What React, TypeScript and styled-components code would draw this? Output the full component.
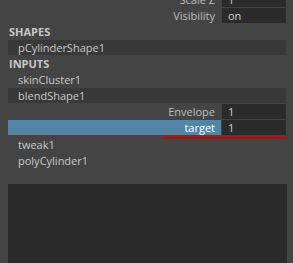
import styled, { createGlobalStyle } from "styled-components";

const Global = createGlobalStyle`
  html, body {
    margin: 0;
    padding: 0;
    background: #444444;
    overflow: hidden;
  }
  body {
    font-family: "Open Sans", "DejaVu Sans", sans-serif;
    font-size: 11px;
    color: #c8c8c8;
  }
`;

const Panel = styled.div`
  width: 293px;
  height: 263px;
  overflow: hidden;
  background: #444444;
  display: flex;
  flex-direction: column;
`;
const List = styled.div`
  margin-top: -8px;
  padding: 0 7px 0 8px;
  display: flex;
  flex-direction: column;
`;
const AttrRow = styled.div<{ selected?: boolean }>`
  position: relative;
  display: grid;
  grid-template-columns: 1fr 64px;
  height: 16px;
  padding-bottom: 1px;
  box-sizing: border-box;
`;
const AttrLabel = styled.div<{ selected?: boolean }>`
  background: ${(p) => (p.selected ? "#5285a6" : "transparent")};
  color: ${(p) => (p.selected ? "#ffffff" : "#bdbdbd")};
  text-align: right;
  padding-right: 6px;
  line-height: 15px;
  margin-right: 1px;
`;
const AttrField = styled.div`
  background: #2b2b2b;
  color: #d0d0d0;
  padding-left: 6px;
  line-height: 15px;
`;
const Section = styled.div`
  height: 16px;
  line-height: 16px;
  padding-left: 1px;
  font-weight: bold;
  color: #c8c8c8;
`;
const Node = styled.div<{ active?: boolean }>`
  height: 15px;
  margin-bottom: 1px;
  line-height: 15px;
  padding-left: 10px;
  background: ${(p) => (p.active ? "#393939" : "transparent")};
  color: #c8c8c8;
`;
const Underline = styled.div`
  position: absolute;
  left: 155px;
  right: -1px;
  bottom: -3px;
  height: 2px;
  background: #d40000;
`;
const Spacer = styled.div`
  height: 1px;
`;
const Output = styled.div`
  margin: 15px 6px 0 8px;
  flex: 1;
  background: #2b2b2b;
`;

function Attr({ label, value, selected }: { label: string; value: string; selected?: boolean }) {
  return (
    <AttrRow>
      <AttrLabel selected={selected}>{label}</AttrLabel>
      <AttrField>{value}</AttrField>
      {selected && <Underline />}
    </AttrRow>
  );
}

export default function App() {
  return (
    <Panel>
      <Global />
      <List>
        <Attr label="Scale Z" value="1" />
        <Attr label="Visibility" value="on" />
        <Section>SHAPES</Section>
        <Node active>pCylinderShape1</Node>
        <Section>INPUTS</Section>
        <Node>skinCluster1</Node>
        <Node active>blendShape1</Node>
        <Attr label="Envelope" value="1" />
        <Attr label="target" value="1" selected />
        <Spacer />
        <Node>tweak1</Node>
        <Node>polyCylinder1</Node>
      </List>
      <Output />
    </Panel>
  );
}
